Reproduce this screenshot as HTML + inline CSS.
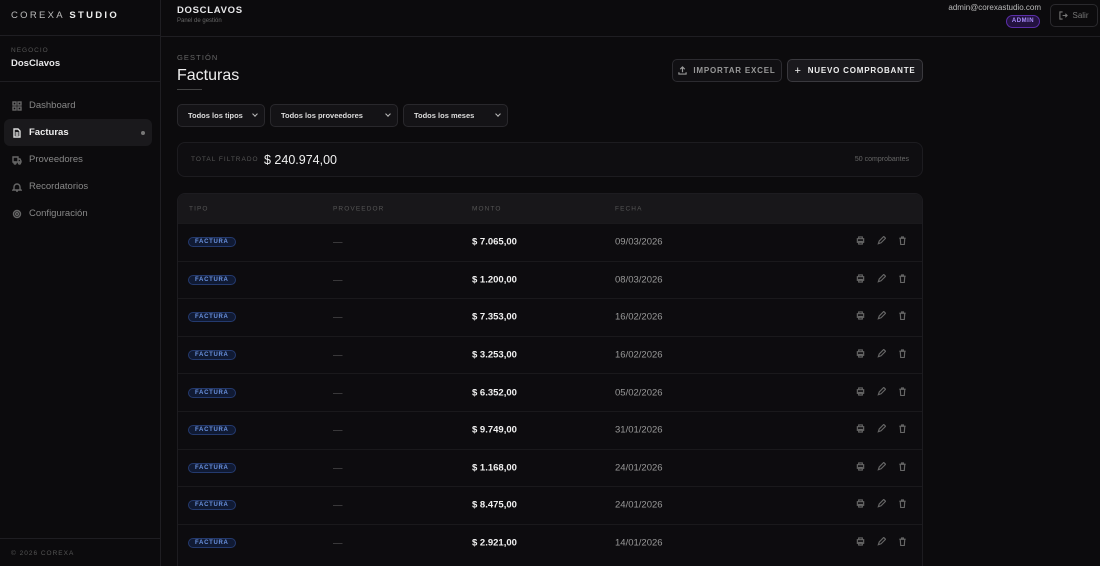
<!DOCTYPE html>
<html><head><meta charset="utf-8"><style>
*{box-sizing:border-box;margin:0;padding:0}
html,body{width:1100px;height:566px;overflow:hidden}
body{background:#0c0b0d;font-family:"Liberation Sans",sans-serif;color:#e8e8ea;position:relative}
.sb{position:absolute;left:0;top:0;width:161px;height:566px;border-right:1px solid #1f1e22;background:#0c0b0d}
.logo{height:36px;border-bottom:1px solid #1f1e22;padding:10px 11px;font-size:9.5px;letter-spacing:2.3px;color:#bbb}
.logo b{color:#eee}
.neg{padding:11px;height:46px;border-bottom:1px solid #1f1e22}
.neg .l{font-size:6.5px;letter-spacing:1px;color:#555}
.neg .n{font-size:9.5px;font-weight:bold;margin-top:4px}
.nav{padding-top:10px}
.it{height:27px;margin:0 8px 0 4px;border-radius:6px;display:flex;align-items:center;padding-left:8px;font-size:9.5px;color:#888}
.it svg{width:10px;height:10px;margin-right:7px;stroke:#666;fill:none;stroke-width:1.4}
.it.a{background:#1a191c;color:#eee;font-weight:bold}
.it.a svg{stroke:#ddd}
.it.a:after{content:"";width:4px;height:4px;border-radius:50%;background:#777;margin-left:auto;margin-right:7px}
.foot{position:absolute;bottom:0;left:0;width:160px;height:28px;border-top:1px solid #1f1e22;padding:11px 11px;font-size:6.5px;letter-spacing:1px;color:#555}
.top{position:absolute;left:161px;top:0;right:0;height:37px;border-bottom:1px solid #1f1e22}
.top .t{position:absolute;left:16px;top:5px;font-size:9.5px;font-weight:bold;letter-spacing:.7px}
.top .s{position:absolute;left:16px;top:18px;font-size:6px;color:#666}
.em{position:absolute;right:59px;top:3px;font-size:8px;color:#bbb}
.adm{position:absolute;right:60px;top:15px;width:34px;height:13px;border:1px solid #5b2ea8;background:#23123f;border-radius:7px;font-size:6px;color:#a78bfa;font-weight:bold;text-align:center;line-height:11px;letter-spacing:.5px}
.sal{position:absolute;right:2px;top:4px;width:48px;height:23px;border:1px solid #2a292d;border-radius:5px;font-size:8px;color:#777;display:flex;align-items:center;justify-content:center;gap:4px}
.gl{position:absolute;left:177px;top:53px;font-size:7.5px;letter-spacing:1.1px;color:#666}
.h1{position:absolute;left:177px;top:67px;font-size:16px;color:#eee}
.ul{position:absolute;left:177px;top:89px;width:25px;height:1px;background:#444}
.btn{position:absolute;top:59px;height:23px;border:1px solid #2c2b30;border-radius:5px;font-size:8px;font-weight:bold;letter-spacing:.8px;display:flex;align-items:center;justify-content:center;gap:6px}
.sel{position:absolute;top:104px;height:23px;border:1px solid #29282c;border-radius:5px;background:#141316;font-size:7.5px;font-weight:bold;color:#ddd;padding-left:10px;line-height:21px}
.sel:after{content:"";position:absolute;right:7px;top:7px;width:3px;height:3px;border-right:1.3px solid #bbb;border-bottom:1.3px solid #bbb;transform:rotate(45deg)}
.tot{position:absolute;left:177px;top:142px;width:746px;height:35px;border:1px solid #1d1c20;border-radius:8px;background:#0f0e11}
.tbl{position:absolute;left:177px;top:193px;width:746px;height:373px;border:1px solid #1d1c20;border-bottom:none;border-radius:8px 8px 0 0;overflow:hidden;background:#0d0c0f}
.th{height:29px;background:#18171a;font-size:6.5px;letter-spacing:1.1px;color:#555;position:relative}
.th span,.r span{position:absolute;top:50%;transform:translateY(-50%)}
.r{height:37.6px;border-top:1px solid #1a191c;position:relative;font-size:9.5px}
.bd{left:10px;border:1px solid #243a6e;background:#101a33;color:#6b93e0;font-size:6px;font-weight:bold;letter-spacing:.7px;border-radius:6px;padding:1px 6px}
.ic{stroke:#666;fill:none;stroke-width:1.3;width:9px;height:9px}
</style></head><body>
<div class="sb">
<div class="logo">COREXA <b>STUDIO</b></div>
<div class="neg"><div class="l">NEGOCIO</div><div class="n">DosClavos</div></div>
<div class="nav">
<div class="it"><svg viewBox="0 0 10 10"><rect x="1" y="1" width="3" height="3"/><rect x="6" y="1" width="3" height="3"/><rect x="1" y="6" width="3" height="3"/><rect x="6" y="6" width="3" height="3"/></svg>Dashboard</div>
<div class="it a"><svg viewBox="0 0 10 10"><path d="M2 1h4l2 2v6H2z M3.5 5h3M3.5 7h3"/></svg>Facturas</div>
<div class="it"><svg viewBox="0 0 10 10"><path d="M1 2h5v5H1zM6 4h2l1 2v1H6"/><circle cx="3" cy="8" r="1"/><circle cx="7.5" cy="8" r="1"/></svg>Proveedores</div>
<div class="it"><svg viewBox="0 0 10 10"><path d="M2 7V5a3 3 0 016 0v2l1 1H1zM4 9h2"/></svg>Recordatorios</div>
<div class="it"><svg viewBox="0 0 10 10"><circle cx="5" cy="5" r="1.5"/><circle cx="5" cy="5" r="3.5"/></svg>Configuración</div>
</div>
<div class="foot">© 2026 COREXA</div>
</div>
<div class="top"><div class="t">DOSCLAVOS</div><div class="s">Panel de gestión</div>
<div class="em">admin@corexastudio.com</div><div class="adm">ADMIN</div>
<div class="sal"><svg width="9" height="9" viewBox="0 0 10 10" fill="none" stroke="#777" stroke-width="1.2"><path d="M4 1H1v8h3M4 5h5M7 3l2 2-2 2"/></svg>Salir</div></div>
<div class="gl">GESTIÓN</div><div class="h1">Facturas</div><div class="ul"></div>
<div class="btn" style="left:672px;width:110px;color:#999;background:#111013"><svg width="9" height="9" viewBox="0 0 10 10" fill="none" stroke="#999" stroke-width="1.3"><path d="M5 7V1M2.5 3.5L5 1l2.5 2.5M1 7v2h8V7"/></svg>IMPORTAR EXCEL</div>
<div class="btn" style="left:787px;width:136px;color:#eee;background:#1a191d;border-color:#3a393e"><span style="font-size:11px;font-weight:normal">+</span>NUEVO COMPROBANTE</div>
<div class="sel" style="left:177px;width:88px">Todos los tipos</div>
<div class="sel" style="left:270px;width:128px">Todos los proveedores</div>
<div class="sel" style="left:403px;width:105px">Todos los meses</div>
<div class="tot"><span style="position:absolute;left:13px;top:13px;font-size:6.5px;letter-spacing:1px;color:#555">TOTAL FILTRADO</span><span style="position:absolute;left:86px;top:10px;font-size:12.5px;color:#f0f0f0">$ 240.974,00</span><span style="position:absolute;right:13px;top:13px;font-size:7px;color:#666">50 comprobantes</span></div>
<div class="tbl">
<div class="th"><span style="left:11px">TIPO</span><span style="left:155px">PROVEEDOR</span><span style="left:294px">MONTO</span><span style="left:437px">FECHA</span></div>
<div id="rows"></div>
</div>
<script>
var d=[["7.065,00","09/03/2026"],["1.200,00","08/03/2026"],["7.353,00","16/02/2026"],["3.253,00","16/02/2026"],["6.352,00","05/02/2026"],["9.749,00","31/01/2026"],["1.168,00","24/01/2026"],["8.475,00","24/01/2026"],["2.921,00","14/01/2026"]];
var h="";d.forEach(function(x){h+='<div class="r"><span class="bd">FACTURA</span><span style="left:155px;color:#555">—</span><span style="left:294px;font-weight:bold;color:#f2f2f2">$ '+x[0]+'</span><span style="left:437px;color:#999">'+x[1]+'</span>'+
'<span style="left:678px"><svg class="ic" viewBox="0 0 10 10"><path d="M3 3V1h4v2M1.5 3h7v4h-7zM3 6h4v3H3z"/></svg></span>'+
'<span style="left:699px"><svg class="ic" viewBox="0 0 10 10"><path d="M1.5 8.5l1-3 5-5 2 2-5 5z"/></svg></span>'+
'<span style="left:720px"><svg class="ic" viewBox="0 0 10 10"><path d="M1.5 2.5h7M4 2.5V1h2v1.5M2.5 2.5l.5 7h4l.5-7"/></svg></span></div>'});
document.getElementById("rows").innerHTML=h;
</script>
</body></html>
